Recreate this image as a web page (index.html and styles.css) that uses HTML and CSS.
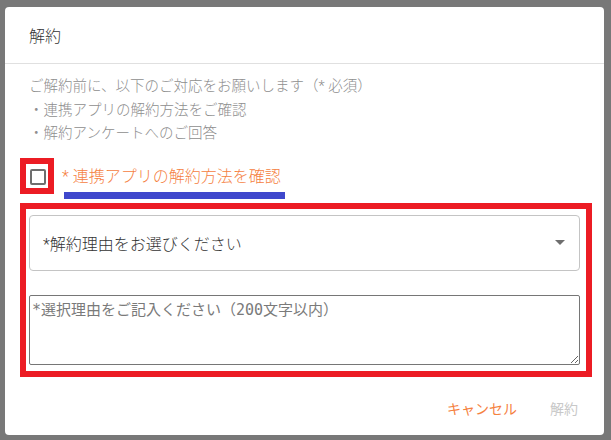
FILE: index.html
```html
<!DOCTYPE html>
<html lang="ja">
<head>
  <meta charset="UTF-8" />
  <meta name="viewport" content="width=device-width, initial-scale=1.0" />
  <title>解約</title>
  <link rel="stylesheet" href="styles.css">
</head>
<body>
  <div class="dialog">
    <div class="dialog-header">解約</div>

    <div class="dialog-body">
      <div class="notice">
        <div>ご解約前に、以下のご対応をお願いします（* 必須）</div>
        <div>・連携アプリの解約方法をご確認</div>
        <div>・解約アンケートへのご回答</div>
      </div>

      <div class="check-row">
        <span class="mark-box"><span class="checkbox"></span></span>
        <span class="check-label">* 連携アプリの解約方法を確認</span>
      </div>

      <div class="mark-form">
        <div class="select">
          <span>*解約理由をお選びください</span>
          <span class="caret"></span>
        </div>
        <textarea class="reason" placeholder="*選択理由をご記入ください（200文字以内）"></textarea>
      </div>
    </div>

    <div class="dialog-actions">
      <button class="btn btn-cancel">キャンセル</button>
      <button class="btn btn-submit" disabled>解約</button>
    </div>
  </div>
</body>
</html>
```

FILE: styles.css
```css
html, body {
  margin: 0;
  height: 100%;
}
body {
  background: #787878;
  font-family: Roboto, "Noto Sans CJK JP", sans-serif;
  padding: 7px 7px 5px 5px;
  box-sizing: border-box;
}
.dialog {
  width: 599px;
  height: 428px;
  background: #fff;
  border-radius: 4px;
  display: flex;
  flex-direction: column;
}
.dialog-header {
  height: 57px;
  box-sizing: border-box;
  padding: 18px 24px 0;
  line-height: 24px;
  font-size: 16px;
  font-weight: 300;
  color: #333;
  border-bottom: 1px solid #e0e0e0;
}
.dialog-body {
  padding: 11px 24px 0;
}
.notice {
  font-size: 14.5px;
  font-weight: 300;
  line-height: 23.5px;
  color: #8e8e8e;
}
.check-row {
  display: flex;
  align-items: flex-start;
  margin: 12px 0 0 -9px;
}
.mark-box {
  border: 6px solid #ec1c24;
  padding: 5px 1px 1px 4px;
  width: 17px;
  height: 18px;
}
.checkbox {
  display: block;
  width: 16px;
  height: 16px;
  box-sizing: border-box;
  border: 2px solid #6e6e6e;
  border-radius: 2px;
}
.check-label {
  margin-left: 8px;
  padding-top: 8px;
  font-size: 16px;
  font-weight: 300;
  line-height: 22px;
  color: #f5813f;
}
.check-label::after {
  content: '';
  display: block;
  height: 7px;
  margin: 4px -4px 0 2px;
  background: #3f48cc;
}
.mark-form {
  margin: 4px -12px 0 -9px;
  border: 6px solid #ec1c24;
  padding: 6px 6px 6px 3px;
}
.select {
  height: 56px;
  box-sizing: border-box;
  border: 1px solid #c4c4c4;
  border-radius: 4px;
  display: flex;
  align-items: center;
  justify-content: space-between;
  padding: 0 14px 0 13px;
  font-size: 16px;
  font-weight: 300;
  color: #333;
}
.caret {
  width: 0;
  height: 0;
  border-left: 5px solid transparent;
  border-right: 5px solid transparent;
  border-top: 5px solid #6e6e6e;
}
.reason {
  display: block;
  width: 100%;
  height: 70px;
  box-sizing: border-box;
  margin-top: 24px;
  border: 1px solid #767676;
  border-radius: 2px;
  padding: 2px;
  font-family: "DejaVu Sans Mono", "Noto Sans CJK JP", monospace;
  font-size: 15px;
  resize: vertical;
}
.reason::placeholder {
  color: #7a7a7a;
}
.dialog-actions {
  flex: 1;
  display: flex;
  justify-content: flex-end;
  align-items: center;
  gap: 33px;
  padding: 4px 26px 0 0;
}
.btn {
  background: none;
  border: none;
  padding: 0;
  font-family: Roboto, "Noto Sans CJK JP", sans-serif;
  font-size: 14px;
  font-weight: 400;
  cursor: pointer;
}
.btn-cancel {
  color: #f5813f;
}
.btn-submit {
  color: #c8c8c8;
  cursor: default;
}
```
